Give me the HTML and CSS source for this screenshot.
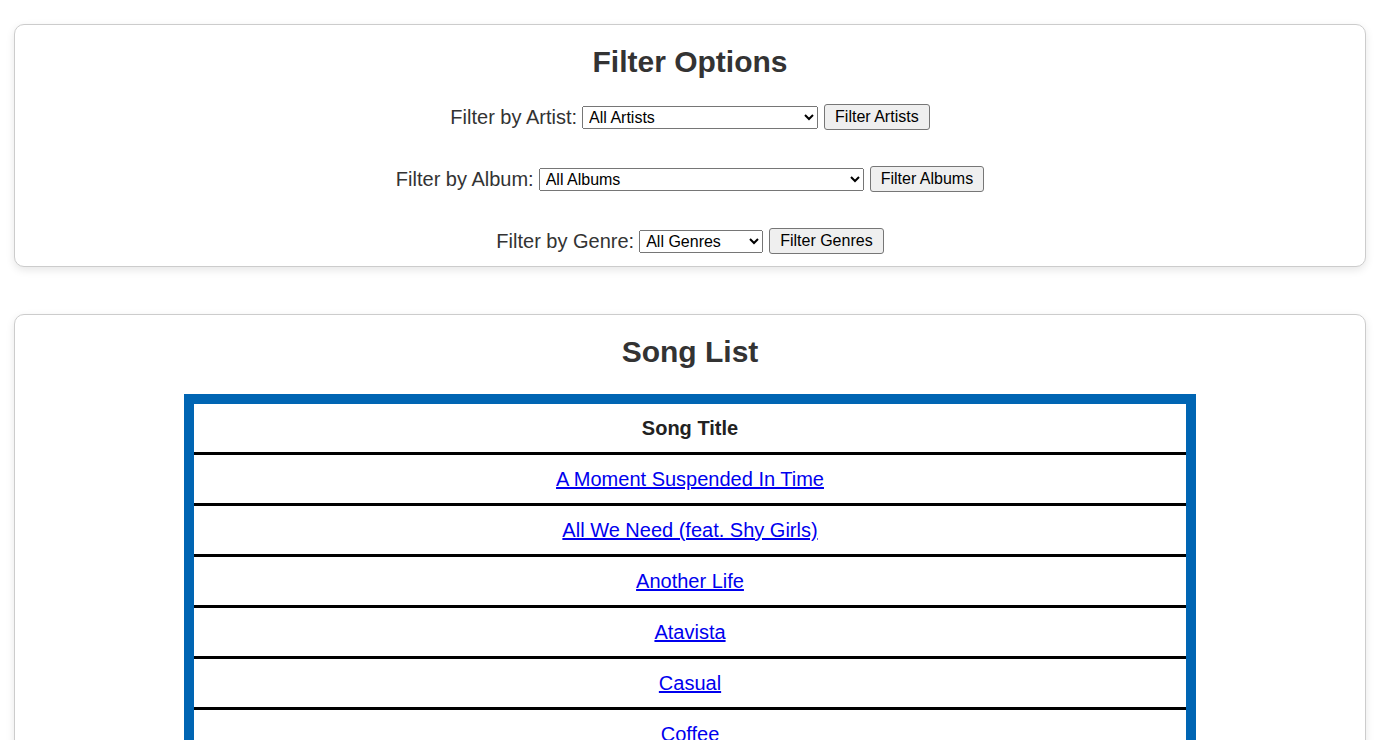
FILE: index.html
```html
<!DOCTYPE html>
<html lang="en">
<head>
<meta charset="utf-8">
<title>Songs</title>
<link rel="stylesheet" href="styles.css">
</head>
<body>
<section class="card filters">
  <h2 class="card-title">Filter Options</h2>
  <form class="filter-row">
    <label class="filter-label" for="artist">Filter by Artist:</label>
    <select id="artist" class="filter-select select-artist"><option>All Artists</option></select>
    <button type="button" class="filter-btn">Filter Artists</button>
  </form>
  <form class="filter-row">
    <label class="filter-label" for="album">Filter by Album:</label>
    <select id="album" class="filter-select select-album"><option>All Albums</option></select>
    <button type="button" class="filter-btn">Filter Albums</button>
  </form>
  <form class="filter-row">
    <label class="filter-label" for="genre">Filter by Genre:</label>
    <select id="genre" class="filter-select select-genre"><option>All Genres</option></select>
    <button type="button" class="filter-btn">Filter Genres</button>
  </form>
</section>

<section class="card songs">
  <h2 class="card-title">Song List</h2>
  <table class="song-table">
    <thead>
      <tr><th>Song Title</th></tr>
    </thead>
    <tbody>
      <tr><td><a href="#">A Moment Suspended In Time</a></td></tr>
      <tr><td><a href="#">All We Need (feat. Shy Girls)</a></td></tr>
      <tr><td><a href="#">Another Life</a></td></tr>
      <tr><td><a href="#">Atavista</a></td></tr>
      <tr><td><a href="#">Casual</a></td></tr>
      <tr><td><a href="#">Coffee</a></td></tr>
    </tbody>
  </table>
</section>
</body>
</html>
```

FILE: styles.css
```css
html, body {
  margin: 0;
  padding: 0;
  background: #ffffff;
}

body {
  font-family: "Liberation Sans", Arial, sans-serif;
  font-size: 20px;
  color: #333333;
  padding: 24px 24px 24px 14px;
}

.card {
  background: #ffffff;
  border: 1px solid #cccccc;
  border-radius: 10px;
  box-shadow: 0 3px 8px rgba(0, 0, 0, 0.1);
  padding: 20px 0 12px;
}

.filters {
  margin-bottom: 47px;
}

.card-title {
  margin: 0 0 25px;
  font-size: 30px;
  font-weight: bold;
  text-align: center;
  color: #333333;
  line-height: 34px;
}

.filter-row {
  display: flex;
  justify-content: center;
  align-items: center;
  height: 26px;
  margin: 0 0 36px;
}

.filter-row:last-child {
  margin-bottom: 0;
}

.filter-label {
  font-size: 20px;
  line-height: 23px;
  color: #333333;
  margin-right: 5px;
}

.filter-select {
  font-family: "Liberation Sans", Arial, sans-serif;
  font-size: 16px;
  height: 23px;
  padding: 0 0 0 2px;
  margin-right: 6px;
  color: #000000;
}

.select-artist { width: 236px; }
.select-album { width: 325px; }
.select-genre { width: 124px; }

.filter-btn {
  font-family: "Liberation Sans", Arial, sans-serif;
  font-size: 16px;
  height: 26px;
  padding: 1px 10px;
  color: #000000;
  background: #efefef;
  border: 1px solid #767676;
  border-radius: 3px;
}

.song-table {
  width: 1012px;
  margin: 0 auto;
  border-collapse: separate;
  border-spacing: 0;
  border: 10px solid #0065b3;
}

.song-table th,
.song-table td {
  text-align: center;
  font-size: 20px;
  line-height: 24px;
  padding: 12px 8px;
  border-bottom: 3px solid #000000;
}

.song-table th {
  font-weight: bold;
  color: #222222;
}

.song-table a {
  color: #0000ee;
  text-decoration: underline;
}
```
